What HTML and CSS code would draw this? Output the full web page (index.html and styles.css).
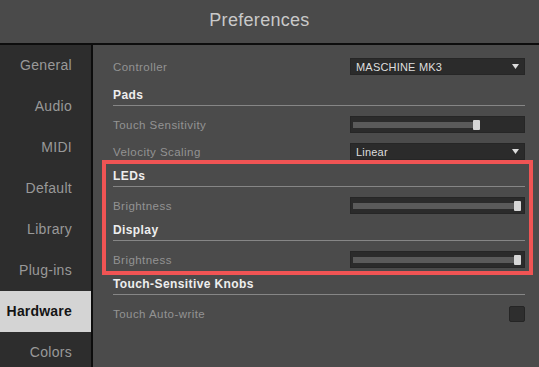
FILE: index.html
```html
<!DOCTYPE html>
<html>

<head>
    <title>Preferences</title>
    <link rel="stylesheet" href="styles.css">
</head>

<body>
    <div class="window">
        <div class="titlebar">Preferences</div>

        <div class="main">
            <div class="sidebar">
                <div class="tab">General</div>
                <div class="tab">Audio</div>
                <div class="tab">MIDI</div>
                <div class="tab">Default</div>
                <div class="tab">Library</div>
                <div class="tab">Plug-ins</div>
                <div class="tab active">Hardware</div>
                <div class="tab">Colors</div>
            </div>

            <div class="content">
                <div class="row first">
                    <span class="label">Controller</span>
                    <div class="select">
                        <span>MASCHINE MK3</span>
                        <svg class="arrow" width="7" height="5" viewBox="0 0 7 5"><polygon points="0,0 7,0 3.5,5" fill="#dcdcdc"/></svg>
                    </div>
                </div>

                <div class="head pads">Pads</div>
                <div class="row">
                    <span class="label">Touch Sensitivity</span>
                    <div class="slider">
                        <div class="fill" style="width: 71%"></div>
                        <div class="thumb"></div>
                    </div>
                </div>
                <div class="row">
                    <span class="label">Velocity Scaling</span>
                    <div class="select">
                        <span>Linear</span>
                        <svg class="arrow" width="7" height="5" viewBox="0 0 7 5"><polygon points="0,0 7,0 3.5,5" fill="#dcdcdc"/></svg>
                    </div>
                </div>

                <div class="highlight">
                    <div class="head">LEDs</div>
                    <div class="row">
                        <span class="label">Brightness</span>
                        <div class="slider">
                            <div class="fill" style="width: 95%"></div>
                            <div class="thumb"></div>
                        </div>
                    </div>
                    <div class="head">Display</div>
                    <div class="row">
                        <span class="label">Brightness</span>
                        <div class="slider">
                            <div class="fill" style="width: 95%"></div>
                            <div class="thumb"></div>
                        </div>
                    </div>
                </div>

                <div class="head after">Touch-Sensitive Knobs</div>
                <div class="row">
                    <span class="label">Touch Auto-write</span>
                    <div class="check"></div>
                </div>
            </div>
        </div>
    </div>
</body>

</html>
```

FILE: styles.css
```css
body {
    margin: 0;
    background: #4b4b4b;
    font-family: "Liberation Sans", Arial, sans-serif;
}

.window {
    width: 539px;
    height: 367px;
    overflow: hidden;
    display: flex;
    flex-direction: column;
}

.titlebar {
    flex: none;
    height: 45px;
    line-height: 41px;
    padding-right: 20px;
    box-sizing: border-box;
    background: #4a4a4a;
    border-bottom: 2px solid #0d0d0d;
    text-align: center;
    color: #c9c9c9;
    font-size: 18px;
    letter-spacing: 0.3px;
}

.main {
    flex: 1;
    min-height: 0;
    display: flex;
}

.sidebar {
    width: 91px;
    background: #2d2d2d;
    border-right: 2px solid #0d0d0d;
    flex: none;
}

.tab {
    height: 41px;
    line-height: 41px;
    text-align: right;
    padding-right: 19px;
    color: #999999;
    font-size: 14px;
    letter-spacing: 0.3px;
}

.tab.active {
    background: #d4d4d4;
    color: #141414;
    font-weight: bold;
    letter-spacing: 0.2px;
}

.content {
    flex: 1;
    background: #4b4b4b;
    padding: 13px 14px 0 20px;
}

.row {
    height: 17px;
    margin-top: 10px;
    display: flex;
    align-items: center;
    justify-content: space-between;
}

.row.first {
    margin-top: 0;
}

.label {
    color: #939393;
    font-size: 11.5px;
    letter-spacing: 0.45px;
}

.head {
    height: 19px;
    line-height: 19px;
    margin-top: 7px;
    border-bottom: 1px solid #868686;
    color: #eeeeee;
    font-size: 12px;
    font-weight: bold;
    letter-spacing: 0.4px;
}

.head.pads {
    margin-top: 11px;
}

.highlight .head:first-child,
.head.after {
    margin-top: 0;
}

.highlight {
    margin: 0 -8px 0 -11px;
    padding: 3px 4px 3px 7px;
    border: 4px solid #f05454;
}

.select {
    width: 175px;
    height: 17px;
    box-sizing: border-box;
    background: #2b2b2b;
    border: 1px solid #262626;
    padding: 0 5px 0 5px;
    display: flex;
    align-items: center;
    justify-content: space-between;
    color: #dedede;
    font-size: 11px;
    letter-spacing: 0.2px;
}

.slider {
    width: 175px;
    height: 17px;
    box-sizing: border-box;
    background: #2b2b2b;
    border: 1px solid #262626;
    padding: 0 2px;
    display: flex;
    align-items: center;
}

.fill {
    height: 6px;
    background: #5a5a5a;
    flex: none;
}

.thumb {
    width: 7px;
    height: 10px;
    background: #d6d6d6;
    border-radius: 1px;
    flex: none;
}

.check {
    width: 16px;
    height: 16px;
    box-sizing: border-box;
    background: #2e2e2e;
    border: 1px solid #252525;
    border-radius: 2px;
}
```
